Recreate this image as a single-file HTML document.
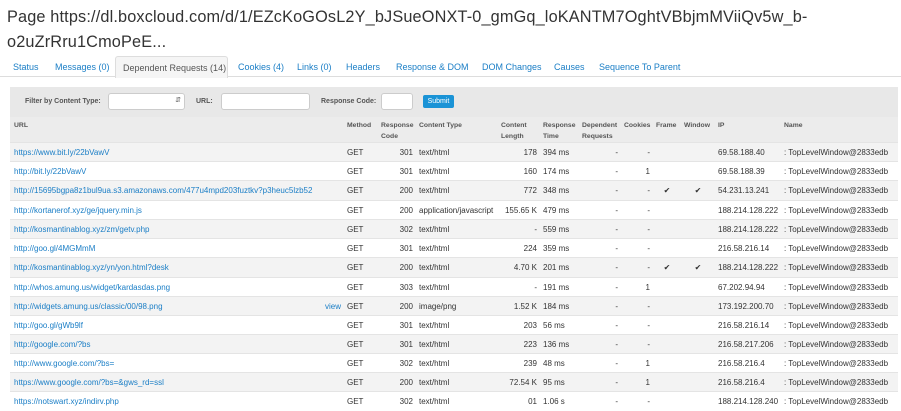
<!DOCTYPE html>
<html><head><meta charset="utf-8"><style>
*{margin:0;padding:0;box-sizing:border-box}
body{width:901px;height:410px;overflow:hidden;background:#fff;font-family:"Liberation Sans",sans-serif;color:#333;position:relative}
h1{position:absolute;left:7px;top:5px;width:890px;font-weight:normal;font-size:16.3px;line-height:25px;color:#333;white-space:nowrap;letter-spacing:0.15px}
.tabs{position:absolute;top:56px;left:0;width:901px;height:21px;border-bottom:1px solid #ddd}
.tab{position:absolute;top:6px;font-size:9px;color:#1a7ec6}
.tab.act{top:0;height:22px;left:115px;width:113px;background:#f5f5f5;border:1px solid #ddd;border-bottom:none;color:#555;padding:6px 0 0 7px;border-radius:3px 3px 0 0}
.filter{position:absolute;left:10px;top:87px;width:888px;height:30px;background:#e8e8e8}
.lbl{position:absolute;top:11px;font-size:7px;font-weight:bold;color:#555}
.inp{position:absolute;top:6px;height:17px;background:#fff;border:1px solid #ccc;border-radius:3px}
.btn{position:absolute;left:413px;top:8px;width:31px;height:13px;background:#1a93d6;border-radius:2px;color:#fff;font-size:7px;text-align:center;line-height:13px}
table{position:absolute;left:10px;top:117px;width:888px;border-collapse:collapse;table-layout:fixed;font-size:8px}
th{background:#ececec;color:#555;font-size:6.8px;font-weight:bold;text-align:left;vertical-align:top;padding:3px 2px 0 4px;height:25px;line-height:11px}
td{height:19px;padding:0 2px 0 4px;white-space:nowrap;overflow:hidden;border-top:1px solid #e4e4e4}
tr:nth-child(even) td{background:#f3f3f3}
td a{color:#1a7ec6;text-decoration:none}
.r{text-align:right}
.c{text-align:center}
.t{height:20px}
.v{float:right;padding-right:0}
</style></head><body>
<h1>Page https://dl.boxcloud.com/d/1/EZcKoGOsL2Y_bJSueONXT-0_gmGq_loKANTM7OghtVBbjmMViiQv5w_b-<br>o2uZrRru1CmoPeE...</h1>
<div class="tabs">
<span class="tab" style="left:13px">Status</span>
<span class="tab" style="left:55px">Messages (0)</span>
<span class="tab act">Dependent Requests (14)</span>
<span class="tab" style="left:238px">Cookies (4)</span>
<span class="tab" style="left:297px">Links (0)</span>
<span class="tab" style="left:346px">Headers</span>
<span class="tab" style="left:396px">Response &amp; DOM</span>
<span class="tab" style="left:482px">DOM Changes</span>
<span class="tab" style="left:554px">Causes</span>
<span class="tab" style="left:599px">Sequence To Parent</span>
</div>
<div class="filter">
<span class="lbl" style="left:15px">Filter by Content Type:</span>
<div class="inp" style="left:98px;width:77px"><span style="position:absolute;right:3px;top:2px;font-size:7px;color:#555">&#8693;</span></div>
<span class="lbl" style="left:186px">URL:</span>
<div class="inp" style="left:211px;width:89px"></div>
<span class="lbl" style="left:311px">Response Code:</span>
<div class="inp" style="left:371px;width:32px"></div>
<div class="btn">Submit</div>
</div>
<table>
<colgroup><col style="width:333px"><col style="width:34px"><col style="width:38px"><col style="width:82px"><col style="width:42px"><col style="width:39px"><col style="width:42px"><col style="width:32px"><col style="width:28px"><col style="width:34px"><col style="width:66px"><col style="width:118px"></colgroup>
<tr><th>URL</th><th>Method</th><th>Response Code</th><th>Content Type</th><th>Content Length</th><th>Response Time</th><th>Dependent Requests</th><th>Cookies</th><th>Frame</th><th>Window</th><th>IP</th><th>Name</th></tr>
<tr><td><a>https://www.bit.ly/22bVawV</a></td><td>GET</td><td class="r">301</td><td>text/html</td><td class="r">178</td><td>394 ms</td><td class="r">-</td><td class="r">-</td><td></td><td></td><td>69.58.188.40</td><td>: TopLevelWindow@2833edb</td></tr>
<tr><td><a>http://bit.ly/22bVawV</a></td><td>GET</td><td class="r">301</td><td>text/html</td><td class="r">160</td><td>174 ms</td><td class="r">-</td><td class="r">1</td><td></td><td></td><td>69.58.188.39</td><td>: TopLevelWindow@2833edb</td></tr>
<tr><td class="t"><a>http://15695bgpa8z1bul9ua.s3.amazonaws.com/477u4mpd203fuztkv?p3heuc5lzb52</a></td><td>GET</td><td class="r">200</td><td>text/html</td><td class="r">772</td><td>348 ms</td><td class="r">-</td><td class="r">-</td><td class="c">&#10004;</td><td class="c">&#10004;</td><td>54.231.13.241</td><td>: TopLevelWindow@2833edb</td></tr>
<tr><td><a>http://kortanerof.xyz/ge/jquery.min.js</a></td><td>GET</td><td class="r">200</td><td>application/javascript</td><td class="r">155.65 K</td><td>479 ms</td><td class="r">-</td><td class="r">-</td><td></td><td></td><td>188.214.128.222</td><td>: TopLevelWindow@2833edb</td></tr>
<tr><td><a>http://kosmantinablog.xyz/zm/getv.php</a></td><td>GET</td><td class="r">302</td><td>text/html</td><td class="r">-</td><td>559 ms</td><td class="r">-</td><td class="r">-</td><td></td><td></td><td>188.214.128.222</td><td>: TopLevelWindow@2833edb</td></tr>
<tr><td><a>http://goo.gl/4MGMmM</a></td><td>GET</td><td class="r">301</td><td>text/html</td><td class="r">224</td><td>359 ms</td><td class="r">-</td><td class="r">-</td><td></td><td></td><td>216.58.216.14</td><td>: TopLevelWindow@2833edb</td></tr>
<tr><td class="t"><a>http://kosmantinablog.xyz/yn/yon.html?desk</a></td><td>GET</td><td class="r">200</td><td>text/html</td><td class="r">4.70 K</td><td>201 ms</td><td class="r">-</td><td class="r">-</td><td class="c">&#10004;</td><td class="c">&#10004;</td><td>188.214.128.222</td><td>: TopLevelWindow@2833edb</td></tr>
<tr><td><a>http://whos.amung.us/widget/kardasdas.png</a></td><td>GET</td><td class="r">303</td><td>text/html</td><td class="r">-</td><td>191 ms</td><td class="r">-</td><td class="r">1</td><td></td><td></td><td>67.202.94.94</td><td>: TopLevelWindow@2833edb</td></tr>
<tr><td><a class="v">view</a><a>http://widgets.amung.us/classic/00/98.png</a></td><td>GET</td><td class="r">200</td><td>image/png</td><td class="r">1.52 K</td><td>184 ms</td><td class="r">-</td><td class="r">-</td><td></td><td></td><td>173.192.200.70</td><td>: TopLevelWindow@2833edb</td></tr>
<tr><td><a>http://goo.gl/gWb9lf</a></td><td>GET</td><td class="r">301</td><td>text/html</td><td class="r">203</td><td>56 ms</td><td class="r">-</td><td class="r">-</td><td></td><td></td><td>216.58.216.14</td><td>: TopLevelWindow@2833edb</td></tr>
<tr><td><a>http://google.com/?bs</a></td><td>GET</td><td class="r">301</td><td>text/html</td><td class="r">223</td><td>136 ms</td><td class="r">-</td><td class="r">-</td><td></td><td></td><td>216.58.217.206</td><td>: TopLevelWindow@2833edb</td></tr>
<tr><td><a>http://www.google.com/?bs=</a></td><td>GET</td><td class="r">302</td><td>text/html</td><td class="r">239</td><td>48 ms</td><td class="r">-</td><td class="r">1</td><td></td><td></td><td>216.58.216.4</td><td>: TopLevelWindow@2833edb</td></tr>
<tr><td><a>https://www.google.com/?bs=&amp;gws_rd=ssl</a></td><td>GET</td><td class="r">200</td><td>text/html</td><td class="r">72.54 K</td><td>95 ms</td><td class="r">-</td><td class="r">1</td><td></td><td></td><td>216.58.216.4</td><td>: TopLevelWindow@2833edb</td></tr>
<tr><td><a>https://notswart.xyz/indirv.php</a></td><td>GET</td><td class="r">302</td><td>text/html</td><td class="r">01</td><td>1.06 s</td><td class="r">-</td><td class="r">-</td><td></td><td></td><td>188.214.128.240</td><td>: TopLevelWindow@2833edb</td></tr>
</table>
</body></html>
